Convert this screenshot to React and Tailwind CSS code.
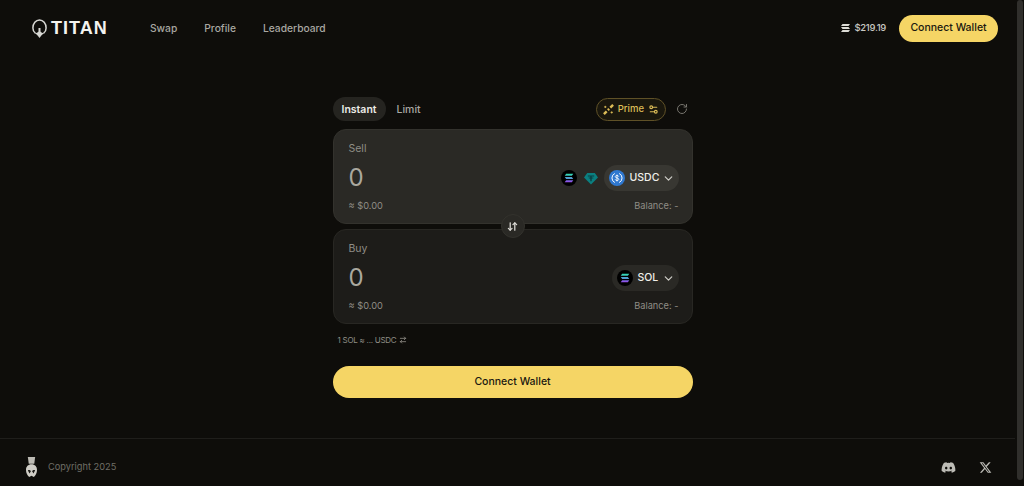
import React from 'react';
import { ArrowDownUp, ArrowRightLeft, ChevronDown, RotateCw, Settings2 } from 'lucide-react';
import { FaDiscord } from 'react-icons/fa';
import { FaXTwitter } from 'react-icons/fa6';

// Solana bars on a black disc
const SolanaIcon = ({ id }) => (
  <svg width="16" height="16" viewBox="0 0 18 18" className="shrink-0">
    <defs>
      <linearGradient id={id} x1="0" y1="0" x2="0" y2="1">
        <stop offset="0" stopColor="#2fe0b0" />
        <stop offset="0.5" stopColor="#4f9fd0" />
        <stop offset="1" stopColor="#9a45f0" />
      </linearGradient>
    </defs>
    <circle cx="9" cy="9" r="9" fill="#000" />
    <path d="M5.800 4.200h8l-1.600 2.200H4.200zM4.200 7.900h8l1.600 2.200h-8zM5.800 11.600h8l-1.600 2.200H4.200z" fill={`url(#${id})`} />
  </svg>
);

const TetherIcon = () => (
  <svg width="14" height="13" viewBox="0 0 14 13" className="shrink-0">
    <path d="M3.200 1h7.600L14 5.500 7 12.500 0 5.500z" fill="#0b7f80" />
    <path d="M3.800 3.400h6.400v1.200H7.700v1c1 .05 1.900.25 1.900.5s-.9.45-1.900.5v2.600H6.300V6.600c-1-.05-1.900-.25-1.900-.5s.9-.45 1.900-.5v-1H3.800z" fill="#0a3f42" />
  </svg>
);

const UsdcIcon = () => (
  <svg width="16" height="16" viewBox="0 0 18 18" className="shrink-0">
    <circle cx="9" cy="9" r="9" fill="#2f78d0" />
    <path d="M6.600 3.900a5.600 5.600 0 0 0 0 10.200M11.400 3.900a5.600 5.600 0 0 1 0 10.200" fill="none" stroke="#fff" strokeWidth="1.100" />
    <path d="M10.900 7.400C10.700 6.600 10 6.200 9 6.200c-1.100 0-1.900.5-1.900 1.350 0 1.900 3.900.9 3.900 2.850 0 .9-.9 1.400-2 1.400-1.100 0-1.900-.5-2.100-1.300M9 5.200v7.600" fill="none" stroke="#fff" strokeWidth="1" />
  </svg>
);

// Wand broken into segments, the way the Prime badge draws it
const PrimeWand = () => (
  <svg width="11" height="11" viewBox="0 0 12 12" fill="none" stroke="currentColor" className="shrink-0">
    <path d="M1 11l3-3M5.300 6.700l1.400-1.400M8 4l3-3" strokeWidth="2.600" />
    <path d="M2.500 2v2.400M1.300 3.200h2.400M9.500 8v2.400M8.300 9.200h2.400" strokeWidth="1" />
  </svg>
);

const TitanLogo = () => (
  <svg width="15" height="19" viewBox="0 0 15 19" fill="none" className="shrink-0">
    <path d="M3.400 14.200C1.800 13 .9 11.200 .9 8.900 .9 4.500 3.800 .9 7.500 .9s6.600 3.600 6.600 8c0 2.300-.9 4.100-2.500 5.300" stroke="#d6d6d2" strokeWidth="1.500" />
    <path d="M2.600 14.100c1.800.1 2.800-.3 3.900-1.500V9h2v3.600c1.100 1.200 2.100 1.600 3.900 1.500-1.500 1-2.700 1.800-3.400 3l-1.500 1.900L6 17.100c-.7-1.200-1.900-2-3.400-3z" fill="#d6d6d2" />
  </svg>
);

const HelmetIcon = () => (
  <svg width="13" height="22" viewBox="0 0 14 24" className="shrink-0">
    <path d="M3 1h8l-1 7.500H4z" fill="#bdbbb4" />
    <path d="M7 9c3.600 0 6 2.500 6 6.200 0 3.300-1.500 6-3.500 7.800L7 21.500 4.500 23C2.500 21.200 1 18.500 1 15.200 1 11.500 3.400 9 7 9z" fill="#cfcdc6" />
    <path d="M3 15.500c1.500-.6 2.600-.3 3.400 1.200L4.800 19zM11 15.500c-1.500-.6-2.600-.3-3.400 1.200L9.200 19z" fill="#1a1916" />
  </svg>
);

const TokenPill = ({ icon, label, className }) => (
  <button className={`flex items-center h-[26px] rounded-full pl-[5px] pr-[4px] ${className}`}>
    {icon}
    <span className="ml-[5px] text-[10.5px] font-medium text-[#f0efea]">{label}</span>
    <ChevronDown size={13} strokeWidth={2.25} className="shrink-0 ml-auto text-[#d0cfc9]" />
  </button>
);

const SwapPanel = ({ label, tokens, className }) => (
  <div className={`h-[95px] rounded-[13px] border pl-[15px] pr-[13px] pt-[12px] ${className}`}>
    <div className="text-[10.5px] leading-[14px] text-[#8f8d86]">{label}</div>
    <div className="flex items-center justify-between h-[26px] mt-[9px]">
      <span className="text-[24px] leading-none text-[#aaa89f]">0</span>
      {tokens}
    </div>
    <div className="flex items-center justify-between mt-[8px] text-[9.25px] leading-[14px] text-[#8f8d86]">
      <span>≈ $0.00</span>
      <span>Balance: -</span>
    </div>
  </div>
);

export default function App() {
  return (
    <div className="relative min-h-[486px] flex flex-col bg-[#0e0d0a] overflow-hidden antialiased font-['Inter',sans-serif]">
      {/* Header */}
      <header className="flex items-center justify-between h-[56px] pl-[32px] pr-[26px]">
        <div className="flex items-center">
          <div className="flex items-center gap-[4px] w-[118px]">
            <TitanLogo />
            <span className="font-['Liberation_Sans',sans-serif] font-bold text-[18px] leading-none tracking-[1px] text-[#f3f2ee]">TITAN</span>
          </div>
          <nav className="flex items-center gap-[27px] pt-px text-[10.25px] font-medium text-[#a9a8a2]">
            <span>Swap</span>
            <span>Profile</span>
            <span>Leaderboard</span>
          </nav>
        </div>
        <div className="flex items-center gap-[13px]">
          <div className="flex items-center gap-[4px]">
            <svg width="9" height="8" viewBox="0 0 9 8" className="shrink-0">
              <path d="M1.500 0H9L7.500 2H0zM0 3h7.500L9 5H1.500zM1.500 6H9L7.500 8H0z" fill="#dddcd6" />
            </svg>
            <span className="text-[9.5px] font-medium tracking-[-0.3px] text-[#c9c8c2]">$219.19</span>
          </div>
          <button className="h-[27px] w-[99px] rounded-full bg-[#f5d565] text-[10.5px] font-medium text-[#1a1810]">Connect Wallet</button>
        </div>
      </header>

      {/* Swap form */}
      <main className="flex-1 flex justify-center pt-[41px] pl-[1px]">
        <div className="w-[360px]">
          <div className="flex items-center justify-between h-[24px] mb-[8px]">
            <div className="flex items-center text-[10.5px] font-medium">
              <span className="h-[24px] px-[9px] pt-px flex items-center rounded-full bg-[#252420] text-[#ecebe6] font-semibold">Instant</span>
              <span className="ml-[11px] pt-px text-[#a9a8a2]">Limit</span>
            </div>
            <div className="flex items-center gap-[10px] mr-[5px]">
              <button className="flex items-center gap-[4px] h-[23px] px-[5.5px] pt-px rounded-full border border-[#5f5127] bg-[#1a170d] text-[9.5px] font-medium text-[#dcbc57]">
                <PrimeWand />
                <span>Prime</span>
                <Settings2 size={11} strokeWidth={2.5} />
              </button>
              <RotateCw size={12} className="text-[#77756e]" />
            </div>
          </div>

          <div className="relative flex flex-col gap-[5px]">
            <SwapPanel
              label="Sell"
              className="bg-[#2a2925] border-[#33322d]"
              tokens={
                <div className="flex items-center">
                  <SolanaIcon id="sol-sell" />
                  <span className="ml-[7px] mr-[6px]"><TetherIcon /></span>
                  <TokenPill icon={<UsdcIcon />} label="USDC" className="bg-[#383732] w-[75px]" />
                </div>
              }
            />
            <SwapPanel
              label="Buy"
              className="bg-[#1d1c19] border-[#282723]"
              tokens={<TokenPill icon={<SolanaIcon id="sol-buy" />} label="SOL" className="bg-[#2a2925] w-[67px]" />}
            />
            {/* flip button sits over both panels */}
            <button className="absolute left-1/2 top-[85px] -translate-x-1/2 w-[24px] h-[24px] rounded-full bg-[#2a2925] border border-[#33322d] flex items-center justify-center text-[#dddcd6]">
              <ArrowDownUp size={11} strokeWidth={2.75} />
            </button>
          </div>

          <div className="flex items-center gap-[3px] mt-[10px] pl-[5px] text-[8px] tracking-[-0.25px] leading-[12px] text-[#8f8d86]">
            <span>1 SOL ≈ ... USDC</span>
            <ArrowRightLeft size={8} strokeWidth={2.5} />
          </div>

          <button className="w-full h-[32px] mt-[20px] rounded-full bg-[#f5d565] text-[10.5px] font-medium text-[#1a1810]">Connect Wallet</button>
        </div>
      </main>

      {/* Footer */}
      <footer className="flex items-center justify-between h-[48px] mr-[9px] border-t border-[#1f1e1b] pt-[9px] pl-[25px] pr-[23px]">
        <div className="flex items-center gap-[10px]">
          <HelmetIcon />
          <span className="text-[9.25px] text-[#6f6d66]">Copyright 2025</span>
        </div>
        <div className="flex items-center gap-[23px] text-[#bdbcb6]">
          <FaDiscord size={15} />
          <FaXTwitter size={13} />
        </div>
      </footer>

      {/* Page scrollbar thumb */}
      <div className="absolute top-0 right-[1px] bottom-[6px] w-[6px] rounded-full bg-[#302f2c]" />
    </div>
  );
}
